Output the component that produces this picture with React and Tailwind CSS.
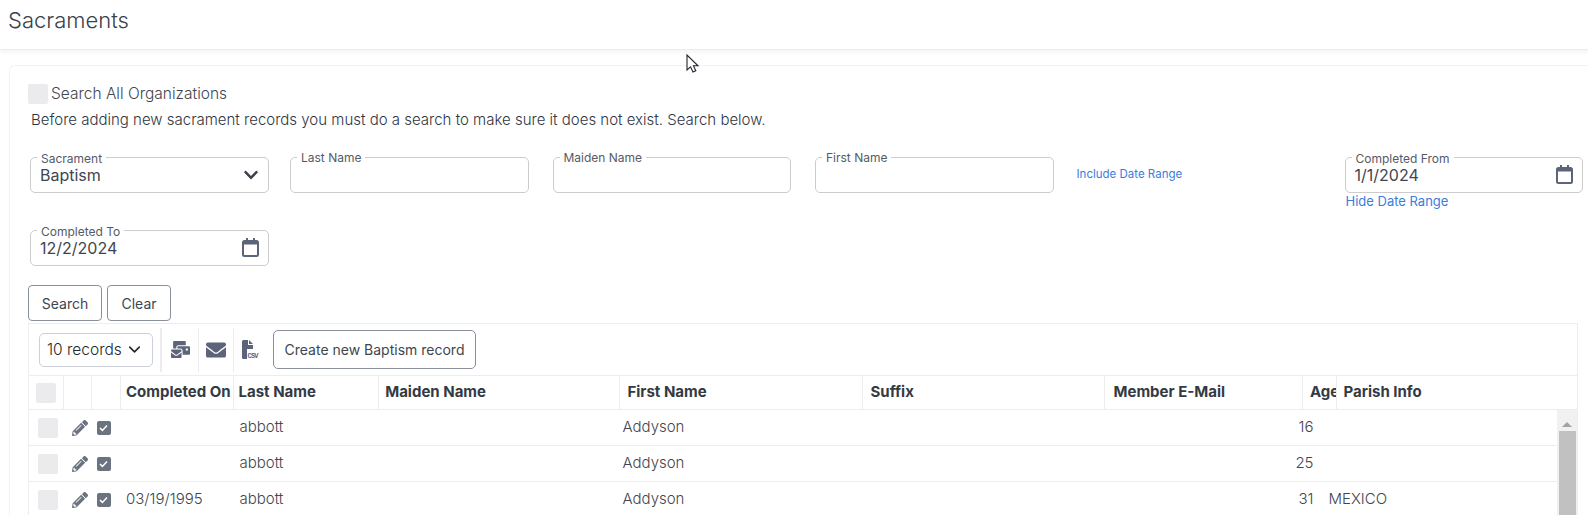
import React from "react";
import { FaChevronDown, FaEnvelope, FaMailBulk, FaPencilAlt } from "react-icons/fa";
import { LuChevronDown } from "react-icons/lu";

const headCols = "grid grid-cols-[34.5px_28px_29.5px_112.5px_145.7px_241.3px_243px_242px_197.5px_34.5px_1fr]";
const bodyCols = "grid grid-cols-[34.5px_28px_29.5px_112.5px_139px_244px_240px_240px_195px_30px_1fr]";

const rows = [
  { date: "", last: "abbott", first: "Addyson", age: "16", parish: "" },
  { date: "", last: "abbott", first: "Addyson", age: "25", parish: "" },
  { date: "03/19/1995", last: "abbott", first: "Addyson", age: "31", parish: "MEXICO" },
];

const CalendarIcon = () => (
  <svg width="17" height="19" viewBox="0 0 17 19" className="text-[#5b6478]">
    <path d="M4 0h2v3H4zM11 0h2v3h-2z" fill="currentColor" />
    <rect x="1" y="3" width="15" height="15" rx="1.5" fill="none" stroke="currentColor" strokeWidth="2" />
    <rect x="1" y="3" width="15" height="3.5" fill="currentColor" />
  </svg>
);

const CsvIcon = () => (
  <svg width="18" height="20" viewBox="0 0 18 20">
    <path d="M1 1.5A1.5 1.5 0 0 1 2.5 0H7v5h5v4H6v10H2.5A1.5 1.5 0 0 1 1 17.5z" fill="#5b6478" />
    <path d="M8 0l4 4H8z" fill="#5b6478" />
    <text x="6.5" y="18" fontSize="7" fontWeight="700" fontFamily="Liberation Mono, monospace" fill="#5b6478" textLength="11">CSV</text>
  </svg>
);

const CheckedBox = () => (
  <span className="flex h-[14px] w-[14px] items-center justify-center rounded-[2px] bg-[#6b7280]">
    <svg width="9" height="8" viewBox="0 0 9 8">
      <path d="M1 4l2.4 2.4L8 1.4" fill="none" stroke="#fff" strokeWidth="1.5" />
    </svg>
  </span>
);

const Field = ({ label, value, labelClass, children, className }) => (
  <div className={`relative h-[36px] w-[238.5px] rounded-[5px] border border-[#cccccc] bg-white ${className || ""}`}>
    <span className={`absolute left-[6px] bg-white px-1 text-[12px] leading-[14px] text-[#555b66] ${labelClass || "top-[-7px]"}`}>
      {label}
    </span>
    {value && <span className="absolute left-[9px] top-[7px] text-[16px] leading-[20px] text-[#3f4650]">{value}</span>}
    {children && <span className="absolute right-[9px] top-[7px]">{children}</span>}
  </div>
);

export default function App() {
  return (
    <div className="relative h-[515px] w-[1588px] overflow-hidden bg-white font-['Inter',sans-serif] text-[#3f4650]">
      <header className="flex h-[50px] items-start border-b border-[#ececec] pl-2 pt-[4px] shadow-[0_2px_4px_rgba(0,0,0,0.05)]">
        <h1 className="text-[22px] font-light leading-[32px] text-[#3a414b]">Sacraments</h1>
      </header>

      <main className="ml-[9px] mt-[15px] rounded-tl-[6px] border-l border-t border-[#f3f3f3] pl-[18px] pt-[18px]">
        <label className="flex items-center gap-[3px]">
          <span className="h-[20px] w-[20px] rounded-[2px] bg-[#ebebed]" />
          <span className="text-[15.5px] font-light leading-[20px]">Search All Organizations</span>
        </label>
        <p className="ml-[3px] mt-[5px] text-[15px] font-light leading-[22px] text-[#30363f]">
          Before adding new sacrament records you must do a search to make sure it does not exist. Search below.
        </p>

        <div className="ml-[2px] mt-[26px] flex h-[36px] items-start">
          <Field label="Sacrament" value="Baptism" labelClass="top-[-6px]">
            <FaChevronDown className="mt-[2px] text-[16px] text-[#3a414b]" />
          </Field>
          <Field label="Last Name" className="ml-[21.5px]" />
          <Field label="Maiden Name" className="ml-[24px]" />
          <Field label="First Name" className="ml-[24px]" />
          <a className="ml-[23px] mt-[9px] text-[11.5px] leading-[16px] text-[#3b7ddd]">Include Date Range</a>
          <div className="ml-auto mr-[5px]">
            <Field label="Completed From" value="1/1/2024" labelClass="top-[-6px]">
              <CalendarIcon />
            </Field>
            <a className="ml-[1px] block text-[13px] leading-[16px] text-[#3b7ddd]">Hide Date Range</a>
          </div>
        </div>

        <Field label="Completed To" value="12/2/2024" labelClass="top-[-6px]" className="ml-[2px] mt-[37px]">
          <CalendarIcon />
        </Field>

        <div className="mt-[19px] flex gap-[5px]">
          <button className="h-[36px] w-[74px] rounded-[4px] border border-[#8a8f9c] text-[14px]">Search</button>
          <button className="h-[36px] w-[64px] rounded-[4px] border border-[#8a8f9c] text-[14px]">Clear</button>
        </div>

        <section className="mt-[2px] w-[1550px] border-l border-r border-t border-[#ededed]">
          <div className="flex h-[51px] items-center pl-[10px]">
            <div className="flex h-[34px] w-[114px] items-center justify-between rounded-[5px] border border-[#ccd0d8] pl-[7px] pr-[8px] text-[#22272e]">
              <span className="text-[15.5px] font-light">10 records</span>
              <LuChevronDown className="text-[19px]" />
            </div>
            <div className="ml-[7px] flex h-[44px] items-center border-l-2 border-[#ececec] text-[#5b6478]">
              <span className="flex w-[36px] justify-center"><FaMailBulk className="text-[19px]" /></span>
              <span className="flex h-full w-[35px] items-center justify-center border-l border-[#ececec]"><FaEnvelope className="text-[20px]" /></span>
              <span className="flex h-full w-[32px] items-center justify-center border-l border-[#ececec]"><CsvIcon /></span>
            </div>
            <button className="ml-[8px] h-[39px] w-[203px] rounded-[5px] border border-[#8a8f9c] border-l-2 text-[14px] border-l-[#8a8f9c] border-[#8a8f9c] border-l-[1px] font-normal">
              Create new Baptism record
            </button>
          </div>

          <div className={`${headCols} h-[35px] border-b border-t border-[#ededed] text-[15px] font-bold leading-[32px] text-[#333a44]`}>
            <div className="flex items-center border-r border-[#ededed] pl-[7px]"><span className="h-[20px] w-[20px] rounded-[2px] bg-[#ebebed]" /></div>
            <div className="border-r border-[#ededed]" />
            <div className="border-r border-[#ededed]" />
            <div className="overflow-hidden whitespace-nowrap border-r border-[#ededed] pl-[5px]">Completed On</div>
            <div className="border-r border-[#ededed] pl-[5px]">Last Name</div>
            <div className="border-r border-[#ededed] pl-[6px]">Maiden Name</div>
            <div className="border-r border-[#ededed] pl-[7px]">First Name</div>
            <div className="border-r border-[#ededed] pl-[7px]">Suffix</div>
            <div className="border-r border-[#ededed] pl-[8px]">Member E-Mail</div>
            <div className="overflow-hidden border-r border-[#ededed] pl-[7px]">Age</div>
            <div className="pl-[6px]">Parish Info</div>
          </div>

          <div className="flex">
            <div className="min-w-0 flex-1">
              {rows.map((row, i) => (
                <div key={i} className={`${bodyCols} h-[36px] items-center border-b border-[#ededed] text-[15px] font-light`}>
                  <div className="pl-[9px]"><span className="block h-[20px] w-[20px] rounded-[2px] bg-[#ebebed]" /></div>
                  <div className="pl-[8px]"><FaPencilAlt className="text-[16px] text-[#6b7280]" /></div>
                  <div className="pl-[5px]"><CheckedBox /></div>
                  <div className="pl-[5px]">{row.date}</div>
                  <div className="pl-[6px]">{row.last}</div>
                  <div />
                  <div className="pl-[6px]">{row.first}</div>
                  <div />
                  <div />
                  <div className="text-right pr-[8px]">{row.age}</div>
                  <div className="pl-[7px]">{row.parish}</div>
                </div>
              ))}
            </div>
            <div className="w-[20px] shrink-0 bg-[#f1f1f1] pt-[12px]">
              <div className="mx-auto h-0 w-0 border-x-[5px] border-b-[5px] border-x-transparent border-b-[#a3a3a3]" />
              <div className="ml-[2px] mt-[4px] h-[100px] w-[17px] bg-[#c1c1c1]" />
            </div>
          </div>
        </section>
      </main>

      <svg className="absolute left-[686px] top-[54px]" width="14" height="20" viewBox="0 0 14 20">
        <path d="M1 1v15l3.5-3.2L7 18l2.8-1.2-2.4-5H12z" fill="#fff" stroke="#23262e" strokeWidth="1.1" />
      </svg>
    </div>
  );
}
